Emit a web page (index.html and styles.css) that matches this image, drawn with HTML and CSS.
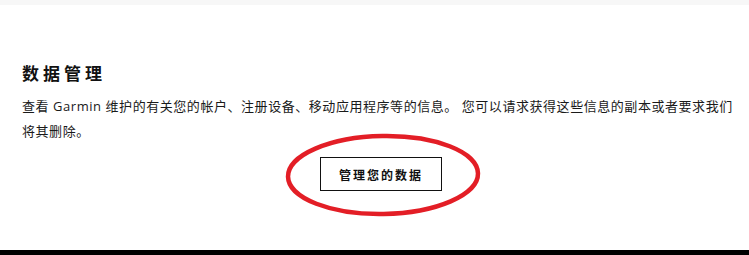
FILE: index.html
```html
<!DOCTYPE html>
<html lang="zh-CN">
<head>
    <meta charset="UTF-8">
    <meta name="viewport" content="width=device-width, initial-scale=1.0">
    <title>数据管理</title>
    <link rel="stylesheet" href="styles.css">
</head>
<body>
    <div class="top-band"></div>

    <div class="page">
        <section class="data-section">
            <h1 class="title">数据管理</h1>
            <p class="desc">查看 Garmin 维护的有关您的帐户、注册设备、移动应用程序等的信息。 您可以请求获得这些信息的副本或者要求我们将其删除。</p>
            <div class="actions">
                <span class="btn-wrap">
                    <button class="button">管理您的数据</button>
                    <!-- red annotation circle -->
                    <svg class="mark" width="200" height="90" viewBox="0 0 200 90">
                        <ellipse cx="100" cy="45" rx="95" ry="39" fill="none" stroke="#e31e26" stroke-width="4.5" transform="rotate(-1 100 45)"/>
                    </svg>
                </span>
            </div>
        </section>
    </div>

    <div class="footer-bar"></div>
</body>
</html>
```

FILE: styles.css
```css
body {
    font-family: "Open Sans", "Noto Sans CJK SC", sans-serif;
    margin: 0;
    padding: 0;
    background-color: #fff;
    color: #1a1a1a;
}
.top-band {
    height: 5px;
    background-color: #f7f7f7;
}
.page {
    height: 245px;
    overflow: hidden;
}
.data-section {
    padding: 57px 12px 0 22px;
}
.title {
    margin: 0;
    font-size: 17px;
    line-height: 24px;
    font-weight: bold;
    letter-spacing: 4px;
    color: #111;
}
.desc {
    margin: 8px 0 0 0;
    font-size: 13px;
    line-height: 25px;
    letter-spacing: 0.55px;
}
.actions {
    margin-top: 13px;
    text-align: center;
    padding-left: 3px;
}
.btn-wrap {
    position: relative;
    display: inline-block;
}
.button {
    width: 122px;
    height: 34px;
    padding: 0;
    background-color: #fff;
    border: 1px solid #111;
    border-radius: 0;
    font-family: "Noto Sans CJK SC", sans-serif;
    font-size: 12px;
    font-weight: bold;
    letter-spacing: 2px;
    color: #111;
    cursor: pointer;
}
.mark {
    position: absolute;
    left: -37px;
    top: -27px;
    pointer-events: none;
}
.footer-bar {
    height: 10px;
    background-color: #000;
}
```
